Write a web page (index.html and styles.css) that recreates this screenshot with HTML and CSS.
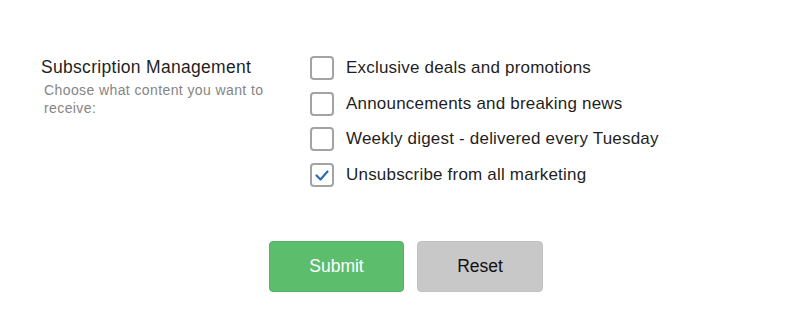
FILE: index.html
```html
<!DOCTYPE html>
<html lang="en">
<head>
  <meta charset="UTF-8">
  <meta name="viewport" content="width=device-width, initial-scale=1.0">
  <title>Subscription Management</title>
  <link rel="stylesheet" href="styles.css">
</head>
<body>

  <form class="prefs-form">
    <div class="field-row">
      <div class="field-info">
        <h3>Subscription Management</h3>
        <p>Choose what content you want to receive:</p>
      </div>

      <div class="options">
        <label class="option">
          <input type="checkbox" name="deals">
          <span class="box"></span>
          Exclusive deals and promotions
        </label>
        <label class="option">
          <input type="checkbox" name="news">
          <span class="box"></span>
          Announcements and breaking news
        </label>
        <label class="option">
          <input type="checkbox" name="digest">
          <span class="box"></span>
          Weekly digest - delivered every Tuesday
        </label>
        <label class="option">
          <input type="checkbox" name="unsubscribe" checked>
          <span class="box">
            <svg viewBox="0 0 24 24" width="24" height="24"><path d="M6.5 12.5 L10.5 16.5 L17.5 8.5" fill="none" stroke="#2b6cb0" stroke-width="2.2" stroke-linecap="round" stroke-linejoin="round"/></svg>
          </span>
          Unsubscribe from all marketing
        </label>
      </div>
    </div>

    <div class="actions">
      <button type="submit" class="btn btn-submit">Submit</button>
      <button type="reset" class="btn btn-reset">Reset</button>
    </div>
  </form>

</body>
</html>
```

FILE: styles.css
```css
body {
  margin: 0;
  padding: 0;
  background: #fff;
  font-family: 'Liberation Sans', Arial, sans-serif;
  color: #222;
}

.prefs-form {
  padding-top: 56px;
}

.field-row {
  display: flex;
}

.field-info {
  width: 310px;
  padding-left: 41px;
  box-sizing: border-box;
}

.field-info h3 {
  margin: 0;
  padding-top: 1px;
  font-size: 17.5px;
  letter-spacing: 0.3px;
  font-weight: normal;
  line-height: 21px;
  color: #1f1f1f;
}

.field-info p {
  margin: 3px 0 0 3px;
  width: 232px;
  font-size: 14px;
  letter-spacing: 0.4px;
  line-height: 18px;
  color: #858585;
}

.options {
  display: flex;
  flex-direction: column;
  gap: 11.5px;
}

.option {
  display: flex;
  align-items: center;
  height: 24px;
  font-size: 17px;
  letter-spacing: 0.2px;
  color: #1f1f1f;
  cursor: pointer;
}

.option input {
  display: none;
}

.box {
  width: 24px;
  height: 24px;
  box-sizing: border-box;
  border: 2px solid #a3a3a3;
  border-radius: 4px;
  margin-right: 12px;
  display: flex;
  align-items: center;
  justify-content: center;
}

.box svg {
  flex: none;
}

.actions {
  display: flex;
  gap: 13px;
  padding-left: 269px;
  margin-top: 54px;
}

.btn {
  height: 51px;
  border-radius: 4px;
  font-family: inherit;
  font-size: 17.5px;
  cursor: pointer;
}

.btn-submit {
  width: 135px;
  background: #5cbe6c;
  border: 1px solid #52b462;
  color: #fff;
}

.btn-reset {
  width: 126px;
  background: #c8c8c8;
  border: 1px solid #c2c2c2;
  color: #111;
}
```
